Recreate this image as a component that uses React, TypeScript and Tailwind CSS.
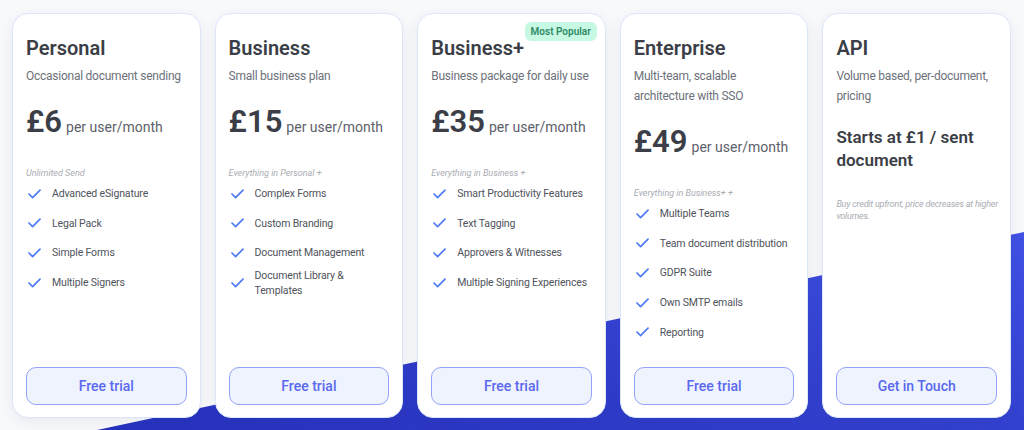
type Plan = {
  name: string;
  desc: string;
  price?: string;
  custom?: string;
  label?: string;
  features?: string[];
  note?: string;
  cta: string;
  popular?: boolean;
};

const plans: Plan[] = [
  {
    name: "Personal",
    desc: "Occasional document sending",
    price: "£6",
    label: "Unlimited Send",
    features: ["Advanced eSignature", "Legal Pack", "Simple Forms", "Multiple Signers"],
    cta: "Free trial",
  },
  {
    name: "Business",
    desc: "Small business plan",
    price: "£15",
    label: "Everything in Personal +",
    features: ["Complex Forms", "Custom Branding", "Document Management", "Document Library & Templates"],
    cta: "Free trial",
  },
  {
    name: "Business+",
    desc: "Business package for daily use",
    price: "£35",
    label: "Everything in Business +",
    features: ["Smart Productivity Features", "Text Tagging", "Approvers & Witnesses", "Multiple Signing Experiences"],
    cta: "Free trial",
    popular: true,
  },
  {
    name: "Enterprise",
    desc: "Multi-team, scalable architecture with SSO",
    price: "£49",
    label: "Everything in Business+ +",
    features: ["Multiple Teams", "Team document distribution", "GDPR Suite", "Own SMTP emails", "Reporting"],
    cta: "Free trial",
  },
  {
    name: "API",
    desc: "Volume based, per-document, pricing",
    custom: "Starts at £1 / sent document",
    note: "Buy credit upfront, price decreases at higher volumes.",
    cta: "Get in Touch",
  },
];

function Tick() {
  return (
    <svg width="13" height="10" viewBox="0 0 13 10" className="shrink-0" fill="none">
      <polyline points="1,5 4.6,8.6 12,1.2" stroke="#4f7cf5" strokeWidth="1.7" strokeLinecap="round" strokeLinejoin="round" />
    </svg>
  );
}

function PlanCard({ plan }: { plan: Plan }) {
  return (
    <div className="relative flex min-w-0 flex-1 basis-0 flex-col rounded-2xl border border-[#dce6fb] bg-white px-[13px] pt-[20px] pb-[12px] shadow-[0_4px_14px_rgba(40,50,90,0.08)]">
      {plan.popular && (
        <span className="absolute top-[8px] right-[8px] rounded-md bg-[#c6f8e3] px-[6px] py-[3px] text-[10px] font-semibold leading-[13px] text-[#2f8a66]">
          Most Popular
        </span>
      )}
      <h2 className="text-[20px] font-semibold leading-[28px] text-[#3b3e46]">{plan.name}</h2>
      <p className="mt-[4px] text-[12px] leading-[20px] tracking-[-0.25px] text-[#6d717a]">{plan.desc}</p>
      {plan.price && (
        <div className="mt-[16px] flex items-baseline gap-[4px] whitespace-nowrap text-[#3b3e46]">
          <span className="text-[31px] font-semibold leading-[40px]">{plan.price}</span>
          <span className="text-[14px] text-[#5d616a]">per user/month</span>
        </div>
      )}
      {plan.custom && (
        <p className="mt-[20px] pr-[10px] text-[17px] font-semibold leading-[23px] text-[#3b3e46]">{plan.custom}</p>
      )}
      {plan.label && (
        <p className="mt-[25px] text-[9px] italic leading-[12px] text-[#a9acb3]">{plan.label}</p>
      )}
      {plan.note && (
        <p className="mt-[26px] -mr-[6px] text-[9px] italic leading-[12px] tracking-[-0.2px] text-[#a9acb3]">{plan.note}</p>
      )}
      {plan.features && (
        <ul className="flex flex-col">
          {plan.features.map((f) => (
            <li key={f} className="flex min-h-[29.6px] items-center gap-[11px] pl-[2px] text-[10.5px] leading-[15px] tracking-[-0.15px] text-[#4f535b]">
              <Tick />
              <span>{f}</span>
            </li>
          ))}
        </ul>
      )}
      <button className="mt-auto h-[38px] w-full rounded-[10px] border border-[#93a2f8] bg-[#eef3fe] text-[14px] font-medium text-[#5a68ef]">
        {plan.cta}
      </button>
    </div>
  );
}

export default function App() {
  return (
    <div
      className="relative h-[430px] w-[1024px] overflow-hidden bg-[#f8f9fb]"
      style={{ fontFamily: 'Roboto, "Liberation Sans", sans-serif' }}
    >
      <svg className="absolute inset-0" width="1024" height="430" viewBox="0 0 1024 430">
        <defs>
          <linearGradient id="wave" x1="0" y1="1" x2="1" y2="0">
            <stop offset="0" stopColor="#2631bd" />
            <stop offset="1" stopColor="#4051e4" />
          </linearGradient>
        </defs>
        <polygon points="97,430 1024,232 1024,430" fill="url(#wave)" />
      </svg>
      <div className="relative flex h-full gap-[14px] pt-[13px] pr-[13px] pb-[12px] pl-[12px]">
        {plans.map((p) => (
          <PlanCard key={p.name} plan={p} />
        ))}
      </div>
    </div>
  );
}
